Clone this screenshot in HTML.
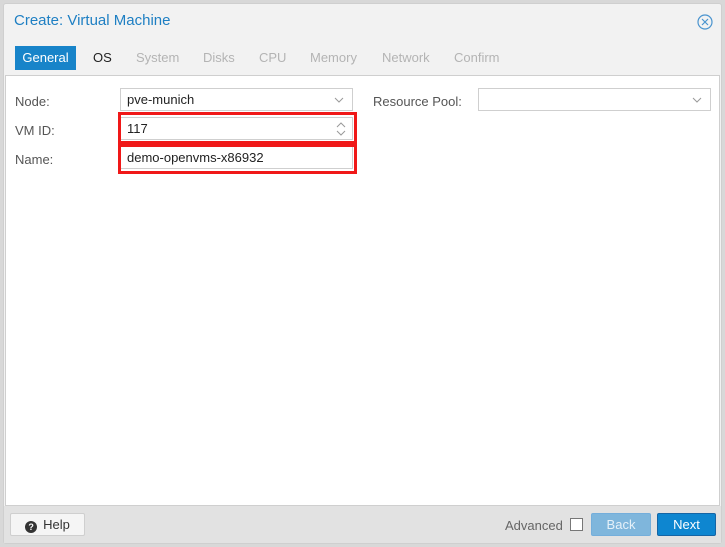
<!DOCTYPE html>
<html><head><style>
*{box-sizing:border-box;margin:0;padding:0}
body{width:725px;height:547px;background:#d8d8d8;font-family:"Liberation Sans",sans-serif;font-size:13px;position:relative;overflow:hidden;color:#333}
.win{position:absolute;left:3px;top:3px;width:719px;height:541px;background:#f2f2f2;border:1px solid #cfcfcf;border-radius:3px}
.title{position:absolute;left:10px;top:8px;font-size:15px;color:#1e7fc3}
.close{position:absolute;left:693px;top:10px}
.tab{position:absolute;top:42px;height:24px;line-height:24px;font-size:13px;color:#b4b4b4}
.body{position:absolute;left:1px;top:71px;width:715px;height:431px;background:#fff;border:1px solid #cfcfcf}
.lbl{position:absolute;font-size:13px;color:#555}
.fld{position:absolute;height:23px;border:1px solid #cfcfcf;background:#fff;font-size:13px;line-height:21px;padding-left:6px;color:#222}
.red{position:absolute;border:3px solid #f01818}
.foot{position:absolute;left:0;top:502px;width:717px;height:37px;background:#e2e2e2}
.btn{position:absolute;height:23px;line-height:21px;text-align:center;font-size:13px;border-radius:2px}
.chev{position:absolute;right:8px;top:8px}
</style></head><body>
<div class="win">
<div class="title">Create: Virtual Machine</div>
<svg class="close" width="16" height="16" viewBox="0 0 16 16"><circle cx="8" cy="8" r="7" fill="none" stroke="#4a94cf" stroke-width="1.2"/><path d="M5 5L11 11M11 5L5 11" stroke="#4a94cf" stroke-width="1.2"/></svg>
<div class="tab" style="left:11px;width:61px;background:#1884c9;color:#fff;text-align:center">General</div>
<div class="tab" style="left:89px;color:#222">OS</div>
<div class="tab" style="left:132px">System</div>
<div class="tab" style="left:199px">Disks</div>
<div class="tab" style="left:255px">CPU</div>
<div class="tab" style="left:306px">Memory</div>
<div class="tab" style="left:378px">Network</div>
<div class="tab" style="left:450px">Confirm</div>
<div class="body">
<div class="lbl" style="left:9px;top:18px">Node:</div>
<div class="fld" style="left:114px;top:12px;width:233px">pve-munich<svg class="chev" width="10" height="6" viewBox="0 0 10 6"><path d="M1 1L5 5L9 1" fill="none" stroke="#999"/></svg></div>
<div class="lbl" style="left:9px;top:47px">VM ID:</div>
<div class="fld" style="left:114px;top:41px;width:233px">117<svg style="position:absolute;right:6px;top:3px" width="10" height="16" viewBox="0 0 10 16"><path d="M1 6L5 2L9 6M1 10L5 14L9 10" fill="none" stroke="#999" stroke-width="1"/></svg></div>
<div class="red" style="left:112px;top:36px;width:239px;height:32px"></div>
<div class="lbl" style="left:9px;top:76px">Name:</div>
<div class="fld" style="left:114px;top:70px;width:233px">demo-openvms-x86932</div>
<div class="red" style="left:112px;top:68px;width:239px;height:30px"></div>
<div class="lbl" style="left:367px;top:18px">Resource Pool:</div>
<div class="fld" style="left:472px;top:12px;width:233px"><svg class="chev" width="10" height="6" viewBox="0 0 10 6"><path d="M1 1L5 5L9 1" fill="none" stroke="#999"/></svg></div>
</div>
<div class="foot">
<div class="btn" style="left:6px;top:7px;width:75px;border:1px solid #cfcfcf;background:#f5f5f5;color:#333"><span style="display:inline-block;width:12px;height:12px;border-radius:6px;background:#333;color:#fff;font-size:9px;line-height:12px;font-weight:bold;vertical-align:-1px;margin-right:6px">?</span>Help</div>
<div style="position:absolute;left:501px;top:12px;color:#666">Advanced</div>
<div style="position:absolute;left:566px;top:12px;width:13px;height:13px;border:1px solid #777;background:#fff"></div>
<div class="btn" style="left:587px;top:7px;width:60px;background:#7fb6dc;border:1px solid #74aedb;color:#e6f1f9">Back</div>
<div class="btn" style="left:653px;top:7px;width:59px;background:#0e86d0;border:1px solid #1565a5;color:#fff">Next</div>
</div>
</div>
</body></html>
